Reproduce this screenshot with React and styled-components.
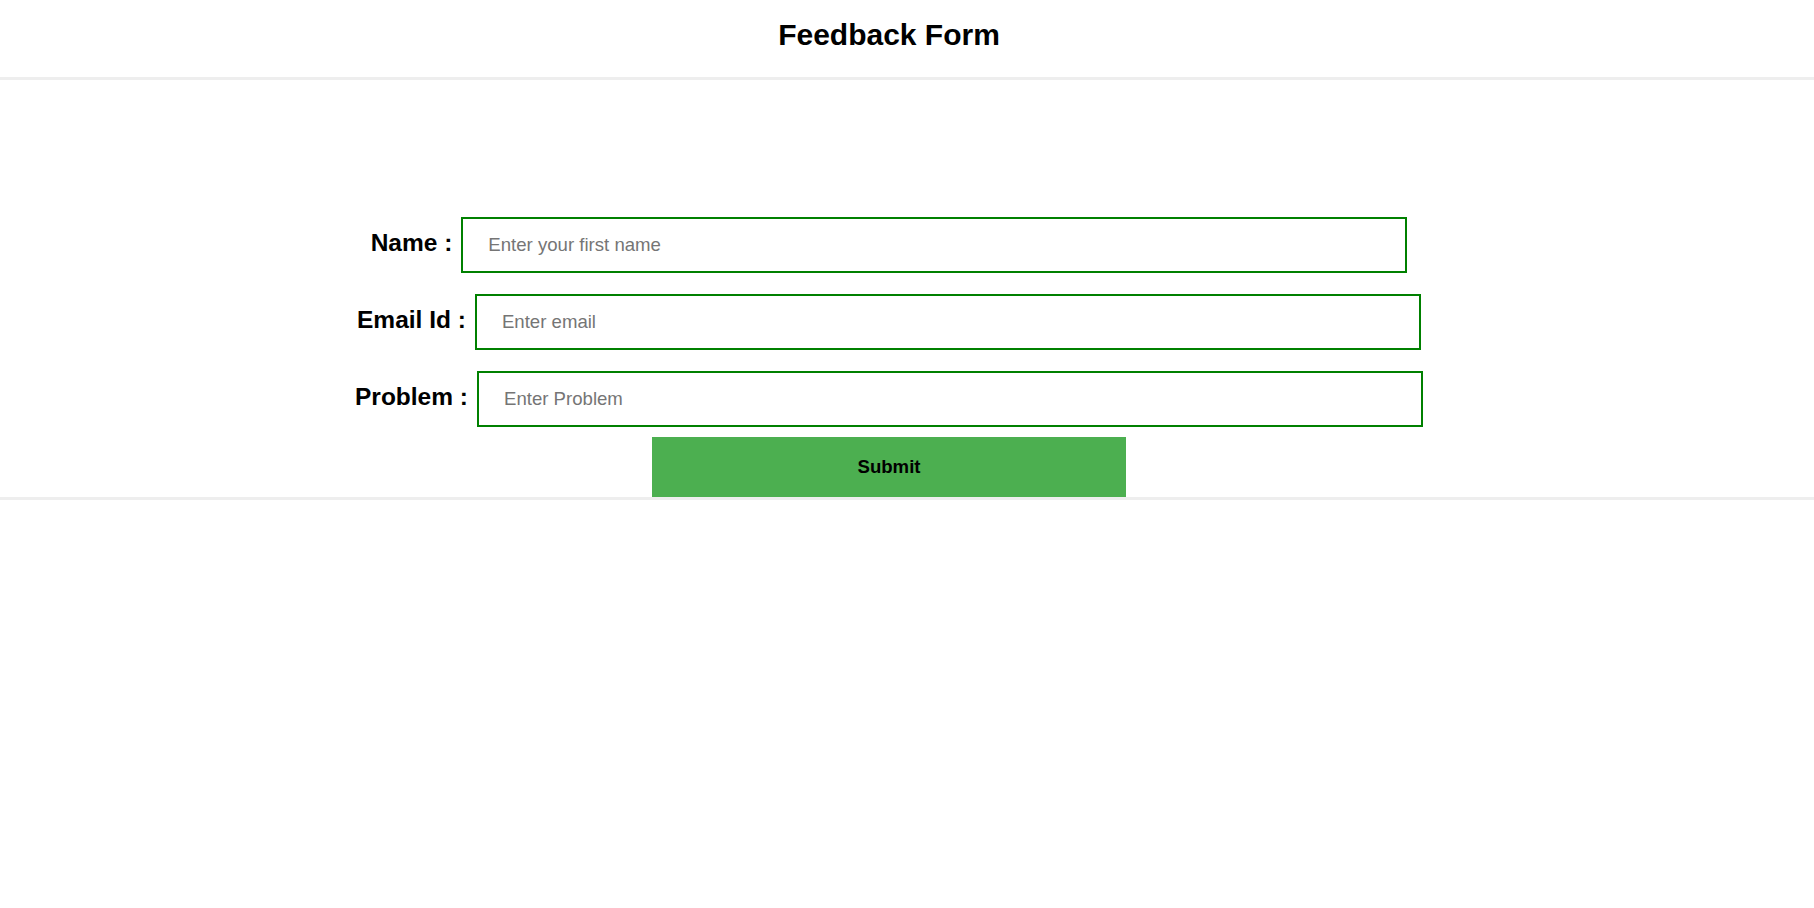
import React from 'react'
import styled, { createGlobalStyle } from 'styled-components'

const GlobalStyle = createGlobalStyle`
  body {
    margin: 0;
    background: #fff;
    font-family: 'Liberation Sans', Arial, sans-serif;
    color: #000;
  }
`

const fields = [
  { id: 'name', label: 'Name :', type: 'text', placeholder: 'Enter your first name' },
  { id: 'email', label: 'Email Id :', type: 'email', placeholder: 'Enter email' },
  { id: 'problem', label: 'Problem :', type: 'text', placeholder: 'Enter Problem' },
]

const App = () => {
  return (
    <>
      <GlobalStyle />
      <Header>
        <Title>Feedback Form</Title>
      </Header>
      <Section>
        <Form onSubmit={(e) => e.preventDefault()}>
          {fields.map((item) => (
            <Row key={item.id}>
              <Label htmlFor={item.id}>{item.label}</Label>
              <Input id={item.id} type={item.type} placeholder={item.placeholder} />
            </Row>
          ))}
          <Submit type='submit'>Submit</Submit>
        </Form>
      </Section>
    </>
  )
}

export default App

const Header = styled.header`
  box-sizing: border-box;
  height: 80px;
  padding: 18px 36px 0 0;
  border-bottom: 3px solid #eee;
  text-align: center;
`

const Title = styled.h1`
  margin: 0;
  font-size: 30px;
  font-weight: 700;
  line-height: 34px;
`

const Section = styled.main`
  padding: 137px 36px 0 0;
  border-bottom: 3px solid #eee;
`

const Form = styled.form`
  display: flex;
  flex-direction: column;
  align-items: center;
  gap: 21px;
`

const Row = styled.div`
  display: flex;
  align-items: baseline;
  gap: 9px;
`

const Label = styled.label`
  font-size: 24.5px;
  font-weight: 700;
`

const Input = styled.input`
  box-sizing: border-box;
  width: 946px;
  height: 56px;
  padding: 0 24px 1px 25px;
  border: 2px solid #008000;
  border-radius: 0;
  outline: none;
  font-family: 'Liberation Sans', Arial, sans-serif;
  font-size: 18.6px;
  color: #000;
  &::placeholder {
    color: #757575;
  }
`

const Submit = styled.button`
  width: 474px;
  height: 60px;
  margin-top: -11px;
  padding-bottom: 2px;
  border: none;
  background: #4caf50;
  color: #000;
  font-family: 'Liberation Sans', Arial, sans-serif;
  font-size: 18.6px;
  font-weight: 700;
  cursor: pointer;
`
